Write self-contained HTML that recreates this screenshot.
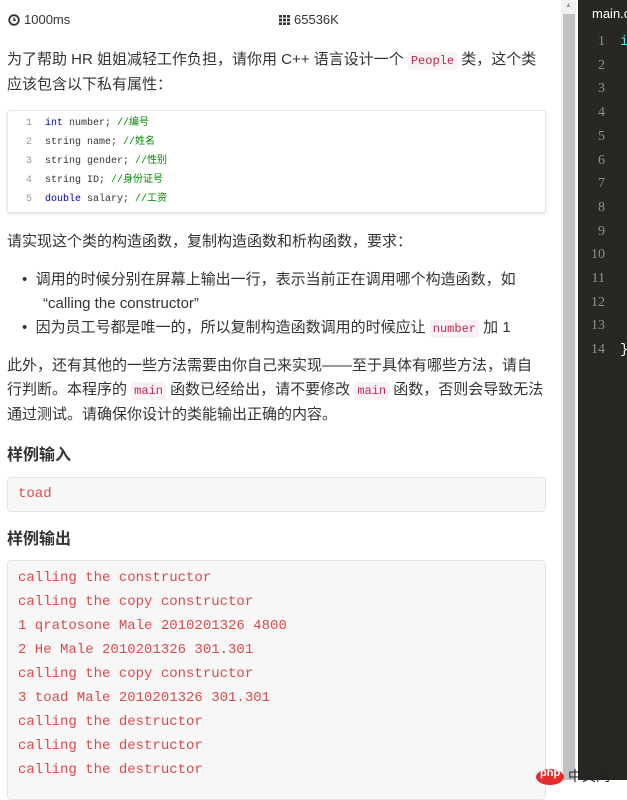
<!DOCTYPE html>
<html><head><meta charset="utf-8"><style>
*{margin:0;padding:0;box-sizing:border-box}
body{width:627px;height:780px;overflow:hidden;background:#fff;position:relative;font-family:"Liberation Sans","Noto Sans CJK SC",sans-serif;color:#333;font-size:15px}
.a{position:absolute;white-space:nowrap}
code{font-family:"Liberation Mono",monospace;font-size:12px;color:#c7254e;background:#f9f2f4;padding:2px 3px;border-radius:3px}
.cb{position:absolute;left:7px;top:110px;width:539px;height:103px;border:1px solid #e6e6e6;border-radius:3px;box-shadow:0 1px 2px #ddd;font-family:"Liberation Mono","Noto Sans CJK SC",monospace;font-size:10px}
.cb div{position:absolute;left:18px;height:19px;line-height:19px;white-space:nowrap;color:#333}
.cb .n{color:#999;display:inline-block;width:19px}
.k{color:#00a}.c{color:#080}
.pre{position:absolute;left:7px;background:#f7f7f7;border:1px solid #e4e4e4;border-radius:4px;font-family:"Liberation Mono",monospace;font-size:14px;color:#dd4a48;padding-left:10px}
.pre div{height:24px;line-height:24px;white-space:nowrap}
h4{position:absolute;left:7px;font-size:16px;font-weight:bold;color:#333}
.ed{position:absolute;left:578px;top:0;width:49px;height:780px;background:#272822}
.ln{position:absolute;left:578px;width:27px;text-align:right;color:#8f908a;font-family:"Liberation Serif",serif;font-size:14px}
</style></head><body>
<svg style="position:absolute;left:8px;top:14px" width="12" height="12" viewBox="0 0 12 12"><circle cx="6" cy="6" r="4.8" fill="none" stroke="#333" stroke-width="1.8"/><path d="M6 3.5V6.3H8" fill="none" stroke="#333" stroke-width="1.4"/></svg>
<div class="a" style="left:24px;top:12px;font-size:13px">1000ms</div>
<svg style="position:absolute;left:279px;top:15px" width="11" height="10" viewBox="0 0 11 10"><g fill="#333"><rect x="0" y="0" width="3" height="2.6"/><rect x="4" y="0" width="3" height="2.6"/><rect x="8" y="0" width="3" height="2.6"/><rect x="0" y="3.7" width="3" height="2.6"/><rect x="4" y="3.7" width="3" height="2.6"/><rect x="8" y="3.7" width="3" height="2.6"/><rect x="0" y="7.4" width="3" height="2.6"/><rect x="4" y="7.4" width="3" height="2.6"/><rect x="8" y="7.4" width="3" height="2.6"/></g></svg>
<div class="a" style="left:294px;top:12px;font-size:13px">65536K</div>
<div class="a" style="left:7px;top:48px;line-height:23px">为了帮助 HR 姐姐减轻工作负担，请你用 C++ 语言设计一个 <code>People</code> 类，这个类<br>应该包含以下私有属性：</div>
<div class="cb">
<div style="top:3px"><span class="n">1</span><span class="k">int</span> number; <span class="c">//编号</span></div>
<div style="top:22px"><span class="n">2</span>string name; <span class="c">//姓名</span></div>
<div style="top:41px"><span class="n">3</span>string gender; <span class="c">//性别</span></div>
<div style="top:60px"><span class="n">4</span>string ID; <span class="c">//身份证号</span></div>
<div style="top:79px"><span class="n">5</span><span class="k">double</span> salary; <span class="c">//工资</span></div>
</div>
<div class="a" style="left:7px;top:230px">请实现这个类的构造函数，复制构造函数和析构函数，要求：</div>
<div class="a" style="left:22px;top:268px;line-height:24px">•&nbsp;&nbsp;调用的时候分别在屏幕上输出一行，表示当前正在调用哪个构造函数，如<br><span style="padding-left:21px">“calling the constructor”</span><br>•&nbsp;&nbsp;因为员工号都是唯一的，所以复制构造函数调用的时候应让 <code>number</code> 加 1</div>
<div class="a" style="left:7px;top:354px;line-height:24px">此外，还有其他的一些方法需要由你自己来实现——至于具体有哪些方法，请自<br>行判断。本程序的 <code>main</code> 函数已经给出，请不要修改 <code>main</code> 函数，否则会导致无法<br>通过测试。请确保你设计的类能输出正确的内容。</div>
<h4 style="top:441px">样例输入</h4>
<div class="pre" style="top:477px;width:539px;height:35px;padding-top:4px"><div>toad</div></div>
<h4 style="top:525px">样例输出</h4>
<div class="pre" style="top:560px;width:539px;height:240px;padding-top:5px">
<div>calling the constructor</div><div>calling the copy constructor</div><div>1 qratosone Male 2010201326 4800</div><div>2 He Male 2010201326 301.301</div><div>calling the copy constructor</div><div>3 toad Male 2010201326 301.301</div><div>calling the destructor</div><div>calling the destructor</div><div>calling the destructor</div></div>
<div style="position:absolute;left:561px;top:0;width:15px;height:780px;background:#f1f1f1"></div>
<div style="position:absolute;left:563px;top:14px;width:12px;height:766px;background:#c1c1c1"></div>
<div class="a" style="left:565px;top:2px;font-size:7px;color:#999">▲</div>
<div class="ed"></div>
<div class="a" style="left:592px;top:6px;color:#fff;font-size:13px">main.c</div>
<div class="ln" style="top:34px">1</div><div class="ln" style="top:58px">2</div><div class="ln" style="top:81px">3</div><div class="ln" style="top:105px">4</div><div class="ln" style="top:129px">5</div><div class="ln" style="top:153px">6</div><div class="ln" style="top:176px">7</div><div class="ln" style="top:200px">8</div><div class="ln" style="top:224px">9</div><div class="ln" style="top:247px">10</div><div class="ln" style="top:271px">11</div><div class="ln" style="top:295px">12</div><div class="ln" style="top:318px">13</div><div class="ln" style="top:342px">14</div>
<div class="a" style="left:620px;top:34px;color:#66d9ef;font-family:'Liberation Mono';font-size:14px">i</div>
<div class="a" style="left:620px;top:342px;color:#f8f8f2;font-family:'Liberation Mono';font-size:14px">}</div>
<div style="position:absolute;left:536px;top:769px;width:28px;height:16px;border-radius:50%;background:#e52b2b"></div>
<div class="a" style="left:540px;top:767px;color:#fff;font-size:11px;font-weight:bold">php</div>
<div class="a" style="left:568px;top:766px;color:#222;font-size:14px">中文网</div>
</body></html>
